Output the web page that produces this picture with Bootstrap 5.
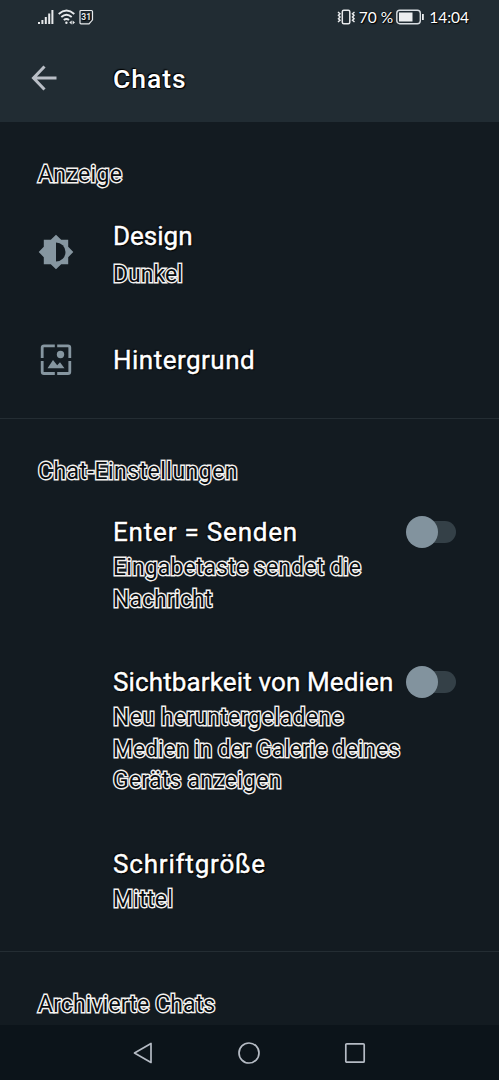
<!DOCTYPE html>
<html lang="de">
<head>
<meta charset="utf-8">
<meta name="viewport" content="width=device-width, initial-scale=1">
<title>Chats</title>
<link href="https://cdn.jsdelivr.net/npm/bootstrap@5.3.0/dist/css/bootstrap.min.css" rel="stylesheet">
<style>
  body { background: #131b21; color: #fff; font-family: Roboto, "Liberation Sans", sans-serif; height: 1080px; overflow: hidden; }
  svg { display: block; flex: none; }
  .topbar { background: #212c33; height: 122px; }
  .status { height: 34px; padding: 0 30px 0 38px; font: 15.5px/34px Lato, sans-serif; text-shadow: 0 0 2px #000, 1px 1px 1px #000; }
  .appbar { height: 87px; padding: 1px 0 0 30px; }
  .appbar h1 { font-size: 26.5px; line-height: 32px; font-weight: 500; margin: 2px 0 0 55px; letter-spacing: .95px; }
  .setting-title, .appbar h1 { text-shadow: 0 0 2px #000, 1px 1px 1px #000, -1px -1px 1px #000; white-space: nowrap; }
  .setting-title { font-size: 26px; line-height: 32px; -webkit-text-stroke: .4px #fff; }
  .outlined { color: #080c0f; font-size: 23px; line-height: 31.5px; white-space: nowrap;
    -webkit-text-stroke: 2.8px #f4f2f0; paint-order: stroke fill; }
  .t-13 { letter-spacing: .13px; }
  .t-25 { letter-spacing: .25px; }
  .t-35 { letter-spacing: .36px; }
  .t-50 { letter-spacing: .48px; }
  .t-80 { letter-spacing: .8px; }
  .t-tight { letter-spacing: -.07px; }
  .group { padding: 0 43px 0 38px; }
  .group + .group { border-top: 1px solid #242d33; }
  .display-group { height: 296px; padding-top: 37px; }
  .chat-group { height: 533px; padding-top: 37px; }
  .archive-group { height: 74px; padding-top: 37px; }
  .setting { display: grid; grid-template-columns: 75px 1fr 50px; }
  .setting > .icon-slot { width: 36px; }
  .theme-icon { padding-top: 14px; }
  .copy { grid-column: 2; min-width: 0; }
  .toggle { width: 50px; height: 32px; position: relative; display: flex; align-items: center; }
  .toggle::before { content: ""; width: 42px; height: 22px; margin-left: 8px; border-radius: 11px; background: #344047; }
  .toggle::after { content: ""; position: absolute; left: 0; top: 0; width: 32px; height: 32px; border-radius: 50%; background: #82939e; }
  .softkeys { height: 55px; background: #0c141a; padding: 0 132px 0 132px; }
</style>
</head>
<body class="d-flex flex-column">
<header class="topbar flex-shrink-0">
  <div class="status d-flex align-items-center justify-content-between">
    <div class="d-flex align-items-center">
      <svg width="16" height="16" viewBox="0 0 16 16" fill="#e8eaec"><path d="M0 13h2v2H0zM3.400 11h2v4h-2zM6.800 8h2v7h-2zM10.200 4.500h2V15h-2zM13.400 1h2v14h-2z"/></svg>
      <svg width="18" height="16" viewBox="0 0 18 16" fill="none" stroke="#e8eaec" stroke-width="1.900" style="margin-left:4px"><path d="M.7 5Q8.500-1.800 16.300 5M3.300 8Q8.500 3.500 13.700 8M5.800 11Q8.500 8.800 11 11"/><circle cx="8.400" cy="13.800" r="1.200" fill="#e8eaec" stroke="none"/><path fill="#e8eaec" stroke="none" d="M11.300 13.500l2.400-2v4zM17 13.500l-2.400-2v4z"/></svg>
      <svg width="15" height="16" viewBox="0 0 15 16" style="margin-left:3px"><path d="M2 1.500h10.500q1 0 1 1v8.300L10 14.800H2q-1 0-1-1V2.500q0-1 1-1z" fill="none" stroke="#e8eaec" stroke-width="1.200"/><text x="7.200" y="11.200" text-anchor="middle" font-family="Roboto, sans-serif" font-size="8.500" font-weight="700" fill="#e8eaec">31</text></svg>
    </div>
    <div class="d-flex align-items-center">
      <svg width="19" height="16" viewBox="0 0 19 16" fill="none" stroke="#e8eaec" stroke-width="1.500"><rect x="5.300" y="1.200" width="7.500" height="13.600" rx="1.500"/><path d="M1 3l2 1.700-1.500 1.600L3 8l-1.500 1.700L3 11.300 1 13M17.500 3l-2 1.700L17 6.300 15.500 8 17 9.700l-1.500 1.600 2 1.700" stroke-width="1.500"/></svg>
      <span style="margin-left:3px">70 %</span>
      <svg width="29" height="16" viewBox="0 0 29 16" style="margin-left:3px"><rect x=".8" y="1.300" width="23.500" height="13.400" rx="3" fill="none" stroke="#d9dee2" stroke-width="1.400"/><path d="M3 3.500h13.500v9H3zM26 5h1.800v6H26z" fill="#eceeef"/></svg>
      <span style="margin-left:4px">14:04</span>
    </div>
  </div>
  <div class="appbar d-flex align-items-center">
    <svg width="28" height="28" viewBox="0 0 28 28" fill="none" stroke="#b9bec6" stroke-width="3"><path d="M14.500 2.500 3.500 14l11 11.500M3.500 14H26.500"/></svg>
    <h1>Chats</h1>
  </div>
</header>

<main class="flex-grow-1 overflow-hidden">
  <section class="group display-group">
    <div class="outlined t-35">Anzeige</div>
    <div class="setting" style="margin-top:29px">
      <div class="icon-slot theme-icon"><svg width="36" height="36" viewBox="0 0 36 36"><path fill="#8696a0" d="M18 .7 23.200 5.800H30.200V12.800L35.300 18 30.200 23.200V30.200H23.200L18 35.300 12.800 30.200H5.800V23.200L.7 18 5.800 12.800V5.800H12.800z"/><path fill="#131b21" d="M18 8.500a9.500 9.500 0 0 1 0 19z"/></svg></div>
      <div class="copy"><div class="setting-title">Design</div><div class="outlined" style="margin-top:7px">Dunkel</div></div>
    </div>
    <div class="setting" style="margin-top:54px">
      <div class="icon-slot"><svg width="36" height="32" viewBox="0 0 36 32"><path d="M16.800 1.800H6q-1.800 0-1.800 1.800V14M19.200 1.800H30q1.800 0 1.800 1.800V14M4.200 17V27.700q0 1.800 1.800 1.800H16.800M31.800 17V27.700q0 1.800-1.800 1.800H19.200" fill="none" stroke="#8696a0" stroke-width="2.800"/><circle cx="22.500" cy="10.500" r="3.700" fill="#8696a0"/><path fill="#8696a0" d="M9.500 24.200 15 16l4.200 5.300 2.800-3 4.500 5.900z"/></svg></div>
      <div class="copy"><div class="setting-title t-50">Hintergrund</div></div>
    </div>
  </section>

  <section class="group chat-group">
    <div class="outlined t-50">Chat-Einstellungen</div>
    <div class="setting" style="margin-top:28.500px">
      <div class="copy"><div class="setting-title t-80">Enter = Senden</div><div class="outlined" style="margin-top:4px"><span class="t-13">Eingabetaste sendet die</span><br><span>Nachricht</span></div></div>
      <div class="toggle" role="switch" aria-checked="false"></div>
    </div>
    <div class="setting" style="margin-top:51px">
      <div class="copy"><div class="setting-title t-13">Sichtbarkeit von Medien</div><div class="outlined" style="margin-top:4px"><span class="t-25">Neu heruntergeladene</span><br><span class="t-tight">Medien in der Galerie deines</span><br><span class="t-25">Geräts anzeigen</span></div></div>
      <div class="toggle" role="switch" aria-checked="false"></div>
    </div>
    <div class="setting" style="margin-top:51.500px">
      <div class="copy"><div class="setting-title t-80">Schriftgröße</div><div class="outlined t-25" style="margin-top:4px">Mittel</div></div>
    </div>
  </section>

  <section class="group archive-group">
    <div class="outlined t-13">Archivierte Chats</div>
  </section>
</main>

<nav class="softkeys d-flex align-items-center justify-content-between flex-shrink-0" aria-label="Navigation">
  <svg width="22" height="24" viewBox="0 0 22 24" fill="none" stroke="#b5bbc4" stroke-width="1.700" stroke-linejoin="round"><path d="M19 2.500V21.500L2.500 12z"/></svg>
  <svg width="24" height="24" viewBox="0 0 24 24" fill="none" stroke="#b5bbc4" stroke-width="1.700"><circle cx="12" cy="12" r="10"/></svg>
  <svg width="24" height="24" viewBox="0 0 24 24" fill="none" stroke="#b5bbc4" stroke-width="1.700"><rect x="2.800" y="2.800" width="18.400" height="18.400" rx="1"/></svg>
</nav>
<script src="https://cdn.jsdelivr.net/npm/bootstrap@5.3.0/dist/js/bootstrap.bundle.min.js"></script>
</body>
</html>
